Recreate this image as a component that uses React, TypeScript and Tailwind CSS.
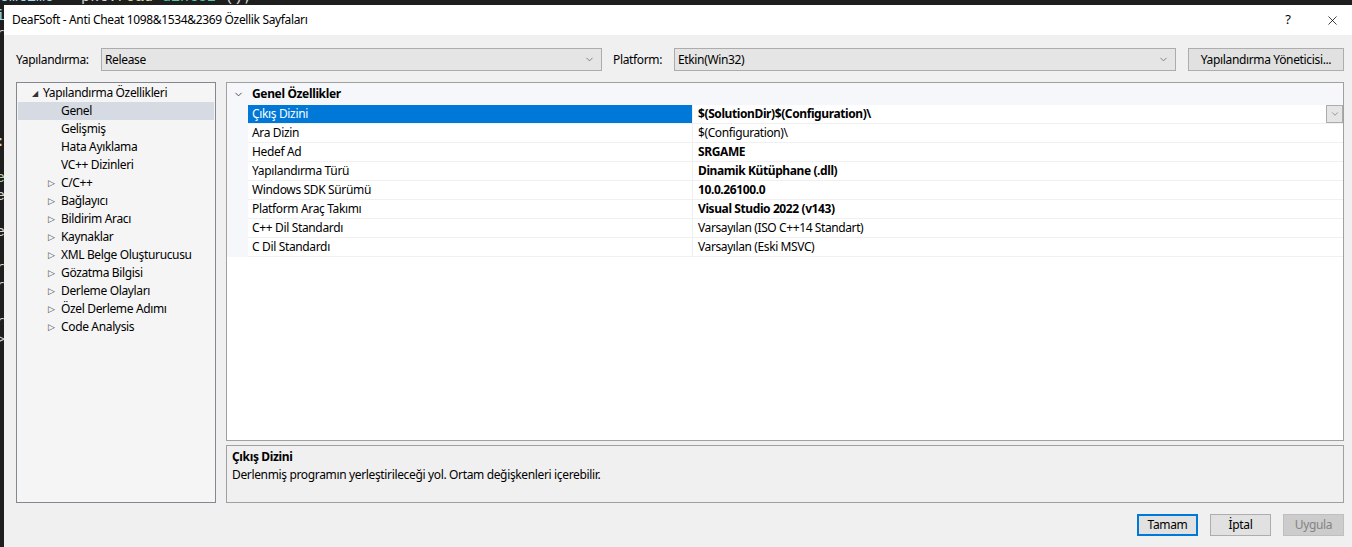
import { ChevronDown, X } from "lucide-react";

const tree = [
  { label: "Genel", kind: "leaf", selected: true },
  { label: "Gelişmiş", kind: "leaf" },
  { label: "Hata Ayıklama", kind: "leaf" },
  { label: "VC++ Dizinleri", kind: "leaf" },
  { label: "C/C++", kind: "node" },
  { label: "Bağlayıcı", kind: "node" },
  { label: "Bildirim Aracı", kind: "node" },
  { label: "Kaynaklar", kind: "node" },
  { label: "XML Belge Oluşturucusu", kind: "node" },
  { label: "Gözatma Bilgisi", kind: "node" },
  { label: "Derleme Olayları", kind: "node" },
  { label: "Özel Derleme Adımı", kind: "node" },
  { label: "Code Analysis", kind: "node" },
];

const props = [
  { name: "Çıkış Dizini", value: "$(SolutionDir)$(Configuration)\\", bold: true, selected: true },
  { name: "Ara Dizin", value: "$(Configuration)\\" },
  { name: "Hedef Ad", value: "SRGAME", bold: true },
  { name: "Yapılandırma Türü", value: "Dinamik Kütüphane (.dll)", bold: true },
  { name: "Windows SDK Sürümü", value: "10.0.26100.0", bold: true },
  { name: "Platform Araç Takımı", value: "Visual Studio 2022 (v143)", bold: true },
  { name: "C++ Dil Standardı", value: "Varsayılan (ISO C++14 Standart)" },
  { name: "C Dil Standardı", value: "Varsayılan (Eski MSVC)" },
];

// left edge of the code editor behind the dialog
const gutter = [
  { t: "i", c: "text-[#9cdcfe]" },
  { t: "r", c: "text-[#d4d4d4]" },
  { t: "", c: "" },
  { t: "", c: "" },
  { t: "", c: "" },
  { t: "", c: "" },
  { t: "", c: "" },
  { t: ":", c: "text-[#d4d4d4]" },
  { t: "", c: "" },
  { t: "e", c: "text-[#b5cea8]" },
  { t: "e", c: "text-[#d4d4d4]" },
  { t: "", c: "" },
  { t: "e", c: "text-[#d4d4d4]" },
  { t: "", c: "" },
  { t: "r", c: "text-[#d4d4d4]" },
  { t: "r", c: "text-[#d4d4d4]" },
  { t: "", c: "" },
  { t: "r", c: "text-[#d4d4d4]" },
  { t: ">", c: "text-[#d4d4d4]" },
];

function Select({ value, width }: { value: string; width: string }) {
  return (
    <div className={`${width} h-[23px] flex items-center justify-between bg-[#e5e5e5] border border-[#acacac] pl-[3px] pr-[6px]`}>
      <span>{value}</span>
      <ChevronDown className="w-[11px] h-[11px] text-[#555]" strokeWidth={1.5} />
    </div>
  );
}

function Button({ label, primary, disabled }: { label: string; primary?: boolean; disabled?: boolean }) {
  return (
    <div
      className={`w-[61px] h-[22px] flex items-center justify-center ${
        primary
          ? "border-2 border-[#0078d7] bg-[#e1e1e1]"
          : disabled
          ? "border border-[#bfbfbf] bg-[#cccccc] text-[#838383]"
          : "border border-[#adadad] bg-[#e1e1e1]"
      }`}
    >
      {label}
    </div>
  );
}

export default function App() {
  return (
    <div
      className="w-[1352px] h-[547px] bg-[#1e1e1e] flex flex-col overflow-hidden text-[12px] text-black tracking-[-0.35px]"
      style={{ fontFamily: '"Noto Sans", "Open Sans", sans-serif' }}
    >
      {/* editor line peeking above the dialog */}
      <div className="h-[5px] overflow-hidden">
        <div className="-mt-[10px] text-[15px] leading-[15px] font-mono tracking-normal text-[#9cdcfe] whitespace-pre">
          emtime = <span className="text-[#d4d4d4]">pkt.</span>
          <span className="text-[#dcdcaa]">read</span>
          <span className="text-[#d4d4d4]">&lt;</span>
          <span className="text-[#4ec9b0]">uint32</span>
          <span className="text-[#d4d4d4]">&gt;();</span>
        </div>
      </div>

      <div className="flex-1 flex min-h-0">
        <div className="w-[5px] flex flex-col pt-[3px] overflow-hidden font-mono text-[15px] leading-[18px]">
          {gutter.map((g, i) => (
            <div key={i} className={`h-[18px] -ml-[4px] ${g.c}`}>
              {g.t}
            </div>
          ))}
        </div>

        {/* dialog */}
        <div className="flex-1 flex flex-col bg-[#f0f0f0]">
          <div className="h-[30px] bg-white flex items-center pl-[8px]">
            <span className="flex-1">DeaFSoft - Anti Cheat 1098&amp;1534&amp;2369 Özellik Sayfaları</span>
            <span className="w-[16px] text-center text-[13px] mr-[29px]">?</span>
            <X className="w-[15px] h-[15px] mr-[12px]" strokeWidth={1.2} />
          </div>

          <div className="flex-1 flex flex-col pl-[11px] pr-[8px] pt-[13px]">
            {/* config row */}
            <div className="flex items-center">
              <span className="w-[86px] pl-[1px]">Yapılandırma:</span>
              <Select value="Release" width="w-[501px]" />
              <span className="ml-[11px] w-[61px]">Platform:</span>
              <Select value="Etkin(Win32)" width="w-[502px]" />
              <div className="ml-[12px] w-[156px] h-[23px] flex items-center justify-center bg-[#e1e1e1] border border-[#adadad]">
                Yapılandırma Yöneticisi...
              </div>
            </div>

            <div className="flex mt-[11px] gap-[10px]">
              {/* tree */}
              <div className="w-[200px] ml-[1px] h-[421px] bg-[#f5f5f5] border border-[#828790] pt-[1px] px-[1px]">
                <div className="h-[18px] flex items-center">
                  <span className="w-[25px] text-right pr-[5px] text-[8px] text-[#333]">◢</span>
                  <span>Yapılandırma Özellikleri</span>
                </div>
                {tree.map((n) => (
                  <div
                    key={n.label}
                    className={`h-[18px] flex items-center ${n.selected ? "bg-[#d6dae3]" : ""}`}
                  >
                    <span className="w-[43px] pl-[30px] text-[9px] text-[#444]">{n.kind === "node" ? "▷" : ""}</span>
                    <span>{n.label}</span>
                  </div>
                ))}
              </div>

              {/* right column */}
              <div className="flex-1 flex flex-col">
                <div className="h-[359px] bg-white border border-[#a0a0a0] flex flex-col">
                  <div className="h-[22px] bg-[#f5f7fa] flex items-center">
                    <ChevronDown className="w-[11px] h-[11px] ml-[6px] text-[#444]" strokeWidth={2} />
                    <span className="ml-[8px] font-bold">Genel Özellikler</span>
                  </div>
                  {props.map((p) => (
                    <div key={p.name} className="h-[19px] flex">
                      <div className="w-[21px] bg-[#f5f7fa]" />
                      <div
                        className={`w-[444px] flex items-center pl-[4px] border-b border-[#f0f0f0] ${
                          p.selected ? "bg-[#0078d7] text-white border-[#0078d7]" : ""
                        }`}
                      >
                        {p.name}
                      </div>
                      <div className="flex-1 flex items-center pl-[5px] border-b border-l border-[#f0f0f0]">
                        <span className={`flex-1 tracking-[-0.4px] ${p.bold ? "font-bold" : ""}`}>{p.value}</span>
                        {p.selected && (
                          <div className="w-[17px] h-[18px] bg-[#e5e5e5] border border-[#acacac] flex items-center justify-center">
                            <ChevronDown className="w-[10px] h-[10px] text-[#666]" strokeWidth={1.5} />
                          </div>
                        )}
                      </div>
                    </div>
                  ))}
                </div>

                <div className="mt-[4px] h-[58px] border border-[#a0a0a0] pl-[5px] pt-[2px] leading-[18px]">
                  <div className="font-bold">Çıkış Dizini</div>
                  <div>Derlenmiş programın yerleştirileceği yol. Ortam değişkenleri içerebilir.</div>
                </div>
              </div>
            </div>

            <div className="flex justify-end gap-[12px] mt-[11px]">
              <Button label="Tamam" primary />
              <Button label="İptal" />
              <Button label="Uygula" disabled />
            </div>
          </div>
        </div>
      </div>
    </div>
  );
}
